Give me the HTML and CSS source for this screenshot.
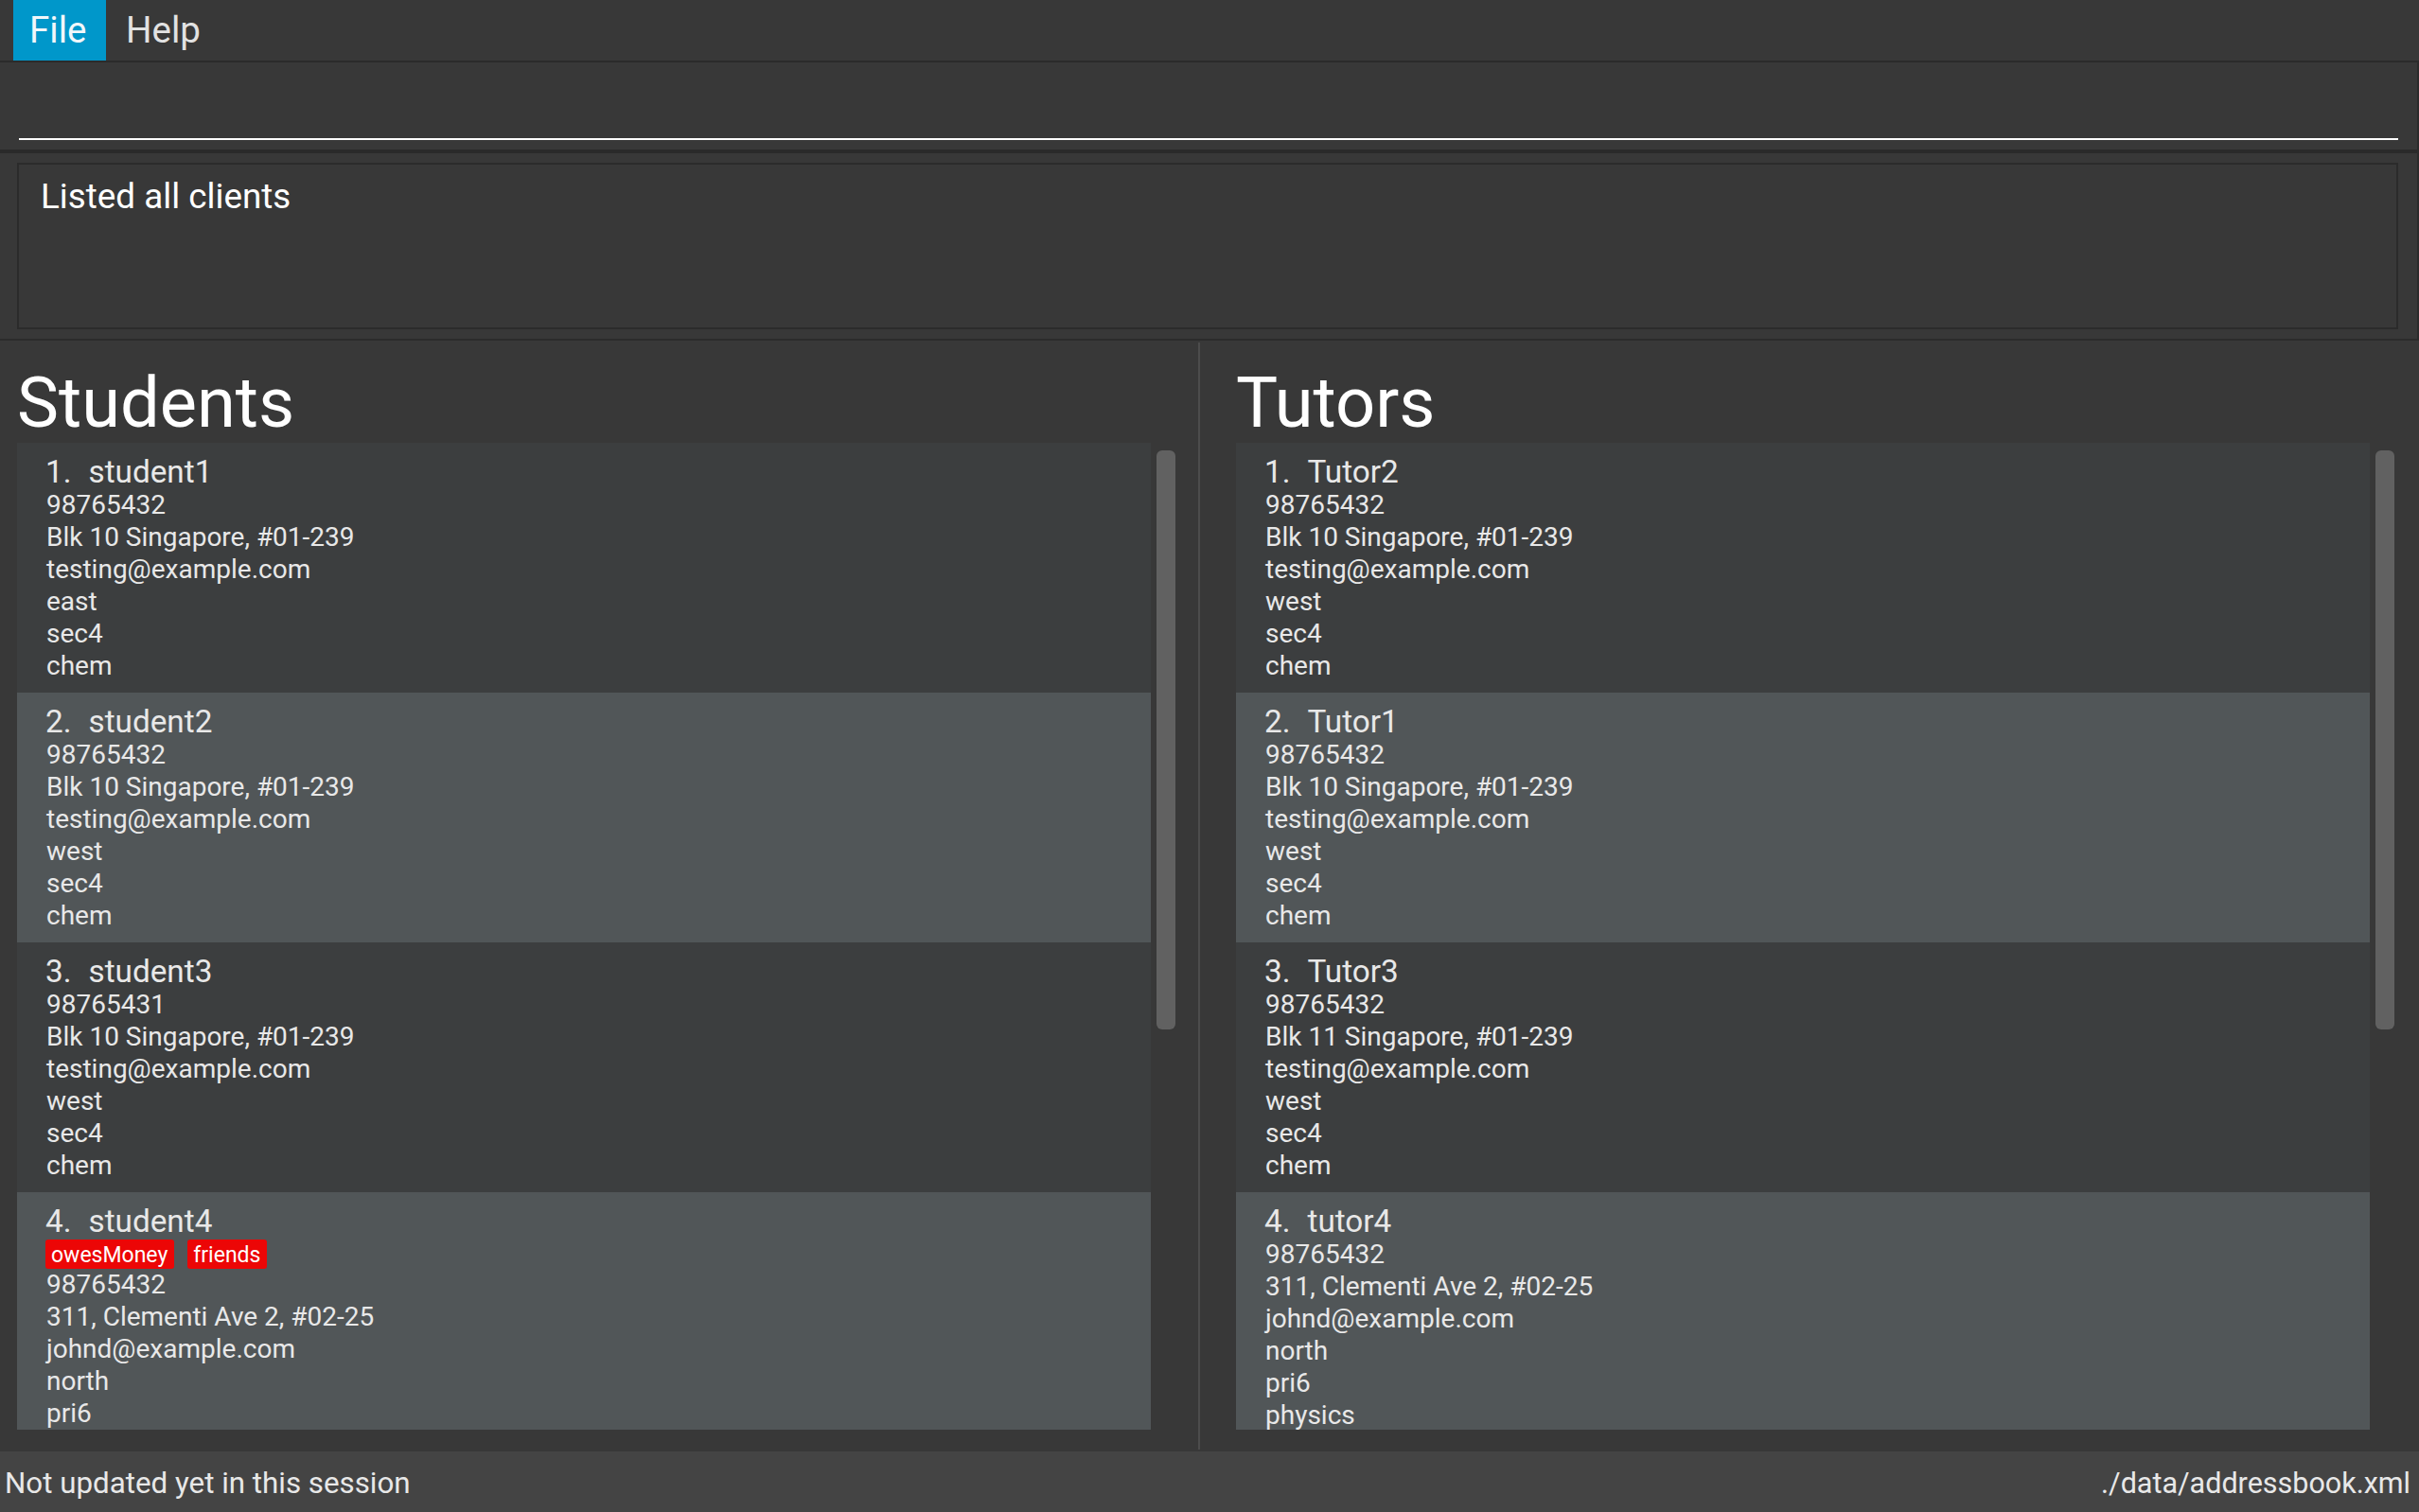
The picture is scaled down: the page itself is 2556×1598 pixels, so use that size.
FILE: index.html
```html
<!DOCTYPE html>
<html lang="en">
<head>
<meta charset="utf-8">
<title>Address Book</title>
<link rel="stylesheet" href="styles.css">
</head>
<body>
<header class="menubar">
  <div class="menu-item active">File</div>
  <div class="menu-item help">Help</div>
</header>
<section class="top">
  <div class="command"><div class="command-field"></div></div>
  <div class="separator"></div>
  <div class="result"><div class="result-box">Listed all clients</div></div>
</section>
<main class="middle">
  <section class="column column-left">
    <h1 class="heading">Students</h1>
    <div class="list-row">
      <div class="viewport">
        <div class="card dark">
          <div class="card-title"><span class="id">1.</span><span class="name">student1</span></div>
          <div class="line">98765432</div>
          <div class="line">Blk 10 Singapore, #01-239</div>
          <div class="line">testing@example.com</div>
          <div class="line">east</div>
          <div class="line">sec4</div>
          <div class="line">chem</div>
        </div>
        <div class="card light">
          <div class="card-title"><span class="id">2.</span><span class="name">student2</span></div>
          <div class="line">98765432</div>
          <div class="line">Blk 10 Singapore, #01-239</div>
          <div class="line">testing@example.com</div>
          <div class="line">west</div>
          <div class="line">sec4</div>
          <div class="line">chem</div>
        </div>
        <div class="card dark">
          <div class="card-title"><span class="id">3.</span><span class="name">student3</span></div>
          <div class="line">98765431</div>
          <div class="line">Blk 10 Singapore, #01-239</div>
          <div class="line">testing@example.com</div>
          <div class="line">west</div>
          <div class="line">sec4</div>
          <div class="line">chem</div>
        </div>
        <div class="card light">
          <div class="card-title"><span class="id">4.</span><span class="name">student4</span></div>
          <div class="tags"><span class="tag">owesMoney</span><span class="tag">friends</span></div>
          <div class="line">98765432</div>
          <div class="line">311, Clementi Ave 2, #02-25</div>
          <div class="line">johnd@example.com</div>
          <div class="line">north</div>
          <div class="line">pri6</div>
        </div>
      </div>
      <div class="scroll-track"><div class="scroll-thumb"></div></div>
    </div>
  </section>
  <div class="divider"></div>
  <section class="column column-right">
    <h1 class="heading">Tutors</h1>
    <div class="list-row">
      <div class="viewport">
        <div class="card dark">
          <div class="card-title"><span class="id">1.</span><span class="name">Tutor2</span></div>
          <div class="line">98765432</div>
          <div class="line">Blk 10 Singapore, #01-239</div>
          <div class="line">testing@example.com</div>
          <div class="line">west</div>
          <div class="line">sec4</div>
          <div class="line">chem</div>
        </div>
        <div class="card light">
          <div class="card-title"><span class="id">2.</span><span class="name">Tutor1</span></div>
          <div class="line">98765432</div>
          <div class="line">Blk 10 Singapore, #01-239</div>
          <div class="line">testing@example.com</div>
          <div class="line">west</div>
          <div class="line">sec4</div>
          <div class="line">chem</div>
        </div>
        <div class="card dark">
          <div class="card-title"><span class="id">3.</span><span class="name">Tutor3</span></div>
          <div class="line">98765432</div>
          <div class="line">Blk 11 Singapore, #01-239</div>
          <div class="line">testing@example.com</div>
          <div class="line">west</div>
          <div class="line">sec4</div>
          <div class="line">chem</div>
        </div>
        <div class="card light">
          <div class="card-title"><span class="id">4.</span><span class="name">tutor4</span></div>
          <div class="line">98765432</div>
          <div class="line">311, Clementi Ave 2, #02-25</div>
          <div class="line">johnd@example.com</div>
          <div class="line">north</div>
          <div class="line">pri6</div>
          <div class="line">physics</div>
        </div>
      </div>
      <div class="scroll-track"><div class="scroll-thumb"></div></div>
    </div>
  </section>
</main>
<footer class="statusbar">
  <span class="status-left">Not updated yet in this session</span>
  <span class="status-right">./data/addressbook.xml</span>
</footer>
</body>
</html>
```
FILE: styles.css
```css
* {
  box-sizing: border-box;
  margin: 0;
  padding: 0;
}

html, body {
  width: 2556px;
  height: 1598px;
  overflow: hidden;
}

body {
  background: #383838;
  font-family: Roboto, "Liberation Sans", sans-serif;
  color: #ffffff;
  display: flex;
  flex-direction: column;
}

/* Menu bar */
.menubar {
  height: 66px;
  flex: none;
  border-bottom: 2px solid #2b2b2b;
  display: flex;
  padding-left: 14px;
}

.menu-item {
  height: 64px;
  line-height: 60px;
  padding: 2px 19px 2px 19px;
  font-size: 38.5px;
  color: #e2e2e2;
}

.menu-item.active {
  width: 98px;
  padding-left: 17px;
  padding-right: 0;
  background: #0097ca;
  color: #f2f7fa;
}

.menu-item.help {
  padding-left: 21px;
}

/* Command + result */
.top {
  flex: none;
  border-right: 2px solid #2b2b2b;
  border-bottom: 2px solid #2b2b2b;
}

.command {
  height: 92px;
  padding: 0 20px 10px 20px;
  display: flex;
  align-items: flex-end;
}

.command-field {
  flex: 1;
  height: 60px;
  border-bottom: 2px solid #ffffff;
}

.separator {
  height: 4px;
  background: #2a2a2a;
}

.result {
  height: 196px;
  padding: 10px 20px 10px 18px;
}

.result-box {
  height: 176px;
  border: 2px solid #2b2b2b;
  padding: 13px 23px;
  font-size: 36.8px;
  line-height: 42px;
  color: #ffffff;
}

/* Middle split */
.middle {
  flex: 1;
  display: flex;
  min-height: 0;
}

.column {
  display: flex;
  flex-direction: column;
  padding-top: 23px;
}

.column-left {
  width: 1266px;
  flex: none;
  padding-left: 18px;
  padding-right: 24px;
}

.column-right {
  flex: 1;
  padding-left: 38px;
  padding-right: 26px;
}

.divider {
  width: 2px;
  flex: none;
  margin: 2px 0;
  background: #4c4c4c;
}

.heading {
  font-size: 74px;
  font-weight: 400;
  line-height: 85px;
  height: 85px;
  color: #ffffff;
}

.list-row {
  height: 1043px;
  display: flex;
}

.viewport {
  flex: 1;
  overflow: hidden;
}

.scroll-track {
  width: 20px;
  flex: none;
  margin-left: 6px;
  padding-top: 8px;
}

.scroll-thumb {
  height: 612px;
  background: #616161;
  border-radius: 6px;
}

/* Cards */
.card {
  padding: 13px 28px 11px 31px;
  color: #e8e8e8;
}

.card.dark {
  background: #3c3e3f;
}

.card.light {
  background: #515658;
}

.card-title {
  font-size: 33.3px;
  line-height: 36px;
  display: flex;
  gap: 18px;
  margin-left: -1px;
}

.line {
  font-size: 28px;
  line-height: 34px;
  white-space: nowrap;
}

.tags {
  height: 31px;
  margin: 1px 0 0 -1px;
  display: flex;
  gap: 14px;
}

.tag {
  height: 31px;
  background: #ec0606;
  color: #ffffff;
  font-size: 23px;
  line-height: 29px;
  padding: 2px 7px 0 6px;
  border-radius: 3px;
}

/* Status bar */
.statusbar {
  height: 64px;
  flex: none;
  background: #444444;
  display: flex;
  justify-content: space-between;
  align-items: baseline;
  padding: 3px 9px 0 5px;
  font-size: 30.5px;
  line-height: 61px;
  color: #e8e8e8;
}

.status-left {
  font-size: 31.3px;
}
```
